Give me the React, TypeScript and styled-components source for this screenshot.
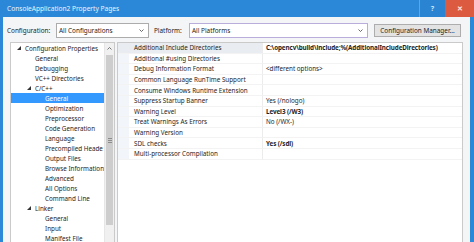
import React from "react";
import styled, { createGlobalStyle } from "styled-components";

const Global = createGlobalStyle`
  html, body { margin: 0; padding: 0; }
  body {
    width: 474px; height: 242px; overflow: hidden;
    font-family: "Noto Sans", "Liberation Sans", sans-serif;
    -webkit-font-smoothing: antialiased;
  }
`;

const Window = styled.div`
  width: 474px; height: 242px; display: flex; flex-direction: column;
  background: #2b88d8; overflow: hidden;
`;

const TitleBar = styled.div`
  height: 17px; flex: none; display: flex; align-items: stretch; color: #eaf4fc;
  font-size: 6.6px;
`;

const Title = styled.div`
  flex: 1; display: flex; align-items: center; padding-left: 7px;
`;

const TitleButton = styled.div<{ $close?: boolean }>`
  width: ${(p) => (p.$close ? 29 : 26)}px; display: flex; align-items: center; justify-content: center;
  background: ${(p) => (p.$close ? "#dc5a3f" : "#2a84d2")};
  border-left: ${(p) => (p.$close ? "none" : "1px solid #5ea6e2")};
  color: ${(p) => (p.$close ? "#fbe5de" : "#cfe6f8")};
  font-size: 7px; font-weight: bold; box-sizing: border-box;
`;

const Body = styled.div`
  flex: 1; min-height: 0; margin: 0 4px 0 3px; background: #f4f5f6;
  display: flex; flex-direction: column; padding-top: 6px; overflow: hidden;
`;

const ConfigRow = styled.div`
  height: 15px; flex: none; display: flex; align-items: center; padding-left: 4px;
  font-size: 6.4px; color: #1b1b1b;
`;

const Label = styled.span<{ $w: number }>`
  width: ${(p) => p.$w}px; flex: none;
`;

const Select = styled.div<{ $w: number; $focus?: boolean }>`
  width: ${(p) => p.$w}px; height: 15px; box-sizing: border-box; flex: none;
  background: #fff; border: 1px solid ${(p) => (p.$focus ? "#b9aedb" : "#acacac")};
  display: flex; align-items: center; padding: 0 4px 0 2px; margin-right: 5px;
`;

const SelectText = styled.span`
  flex: 1;
`;

const Chevron = styled.svg`
  width: 5px; height: 3px; flex: none;
`;

const Button = styled.div`
  width: 87px; height: 13px; box-sizing: border-box; flex: none; margin-left: 1px;
  background: #e3e3e3; border: 1px solid #adadad; display: flex; align-items: center;
  justify-content: center;
`;

const Main = styled.div`
  flex: 1; min-height: 0; display: flex; gap: 2px; padding: 4px 7px 0 7px;
`;

const TreePanel = styled.div`
  width: 105px; flex: none; box-sizing: border-box; background: #fff;
  border: 1px solid #cacaca; border-bottom: none; display: flex; overflow: hidden;
`;

const TreeList = styled.div`
  flex: 1; display: flex; flex-direction: column;
`;

const TreeRow = styled.div<{ $level: number; $selected?: boolean }>`
  height: 10px; flex: none; display: flex; align-items: center;
  padding-left: ${(p) => 4 + p.$level * 10}px;
  font-size: 6.3px; white-space: nowrap; overflow: hidden;
  background: ${(p) => (p.$selected ? "#3399ff" : "transparent")};
  color: ${(p) => (p.$selected ? "#fff" : "#1e1e1e")};
`;

const ArrowBox = styled.span`
  width: 10px; flex: none; display: flex; align-items: center; padding-left: 2px; box-sizing: border-box;
`;

const ScrollBar = styled.div`
  width: 10px; flex: none; background: #f0f0f0; display: flex; flex-direction: column;
  border-left: 1px solid #e6e6e6; box-sizing: border-box;
`;

const ScrollArrow = styled.div`
  height: 11px; flex: none; display: flex; align-items: center; justify-content: center;
`;

const Thumb = styled.div`
  margin: 1px 1px 0 1px; height: 170px; background: #cdcdcd; display: flex;
  align-items: center; justify-content: center;
`;

const Grip = styled.div`
  width: 4px; height: 5px;
  background: repeating-linear-gradient(#8c8c8c 0 1px, transparent 1px 2px);
`;

const Grid = styled.div`
  flex: 1; background: #fff; border: 1px solid #cacaca; border-bottom: none;
  display: flex; flex-direction: column; overflow: hidden; padding-top: 0px;
`;

const GridRow = styled.div`
  height: 10.6px; flex: none; display: flex; font-size: 6.3px; color: #1e1e1e;
  white-space: nowrap;
`;

const NameCell = styled.div<{ $selected?: boolean }>`
  width: 145px; flex: none; display: flex; align-items: center; padding-left: 16px;
  box-sizing: border-box; border-bottom: 1px solid #f3f3f3; border-right: 1px solid #ececec;
  background: ${(p) =>
    p.$selected
      ? "#e9ecf0"
      : "linear-gradient(to right, #f2f6fb 0 11px, #fff 11px)"};
`;

const ValueCell = styled.div<{ $bold?: boolean }>`
  flex: 1; display: flex; align-items: center; padding-left: 3px;
  border-bottom: 1px solid #f3f3f3; font-weight: ${(p) => (p.$bold ? 700 : 400)};
  letter-spacing: ${(p) => (p.$bold ? "-0.1px" : "0")};
`;

const Arrow = () => (
  <svg width="4" height="4" viewBox="0 0 4 4">
    <polygon points="4,0 4,4 0,4" fill="#333" />
  </svg>
);

type TreeItem = { label: string; level: number; arrow?: boolean; selected?: boolean };

const tree: TreeItem[] = [
  { label: "Configuration Properties", level: 0, arrow: true },
  { label: "General", level: 1 },
  { label: "Debugging", level: 1 },
  { label: "VC++ Directories", level: 1 },
  { label: "C/C++", level: 1, arrow: true },
  { label: "General", level: 2, selected: true },
  { label: "Optimization", level: 2 },
  { label: "Preprocessor", level: 2 },
  { label: "Code Generation", level: 2 },
  { label: "Language", level: 2 },
  { label: "Precompiled Heade", level: 2 },
  { label: "Output Files", level: 2 },
  { label: "Browse Information", level: 2 },
  { label: "Advanced", level: 2 },
  { label: "All Options", level: 2 },
  { label: "Command Line", level: 2 },
  { label: "Linker", level: 1, arrow: true },
  { label: "General", level: 2 },
  { label: "Input", level: 2 },
  { label: "Manifest File", level: 2 },
];

type Prop = { name: string; value?: string; bold?: boolean };

const props: Prop[] = [
  { name: "Additional Include Directories", value: "C:\\opencv\\build\\include;%(AdditionalIncludeDirectories)", bold: true },
  { name: "Additional #using Directories" },
  { name: "Debug Information Format", value: "<different options>" },
  { name: "Common Language RunTime Support" },
  { name: "Consume Windows Runtime Extension" },
  { name: "Suppress Startup Banner", value: "Yes (/nologo)" },
  { name: "Warning Level", value: "Level3 (/W3)", bold: true },
  { name: "Treat Warnings As Errors", value: "No (/WX-)" },
  { name: "Warning Version" },
  { name: "SDL checks", value: "Yes (/sdl)", bold: true },
  { name: "Multi-processor Compilation" },
];

const ChevronIcon = () => (
  <Chevron viewBox="0 0 5 3">
    <polyline points="0.5,0.5 2.5,2.5 4.5,0.5" fill="none" stroke="#444" strokeWidth="0.8" />
  </Chevron>
);

export default function App() {
  return (
    <>
      <Global />
      <Window>
        <TitleBar>
          <Title>ConsoleApplication2 Property Pages</Title>
          <TitleButton>?</TitleButton>
          <TitleButton $close>✕</TitleButton>
        </TitleBar>
        <Body>
          <ConfigRow>
            <Label $w={49}>Configuration:</Label>
            <Select $w={93}>
              <SelectText>All Configurations</SelectText>
              <ChevronIcon />
            </Select>
            <Label $w={35}>Platform:</Label>
            <Select $w={179} $focus>
              <SelectText>All Platforms</SelectText>
              <ChevronIcon />
            </Select>
            <Button>Configuration Manager...</Button>
          </ConfigRow>
          <Main>
            <TreePanel>
              <TreeList>
                {tree.map((t, i) => (
                  <TreeRow key={i} $level={t.level} $selected={t.selected}>
                    <ArrowBox>{t.arrow ? <Arrow /> : null}</ArrowBox>
                    {t.label}
                  </TreeRow>
                ))}
              </TreeList>
              <ScrollBar>
                <ScrollArrow>
                  <svg width="5" height="3" viewBox="0 0 5 3">
                    <polyline points="0.5,2.5 2.5,0.5 4.5,2.5" fill="none" stroke="#555" strokeWidth="0.8" />
                  </svg>
                </ScrollArrow>
                <Thumb>
                  <Grip />
                </Thumb>
              </ScrollBar>
            </TreePanel>
            <Grid>
              {props.map((p, i) => (
                <GridRow key={i}>
                  <NameCell $selected={i === 0}>{p.name}</NameCell>
                  <ValueCell $bold={p.bold}>{p.value ?? ""}</ValueCell>
                </GridRow>
              ))}
            </Grid>
          </Main>
        </Body>
      </Window>
    </>
  );
}
